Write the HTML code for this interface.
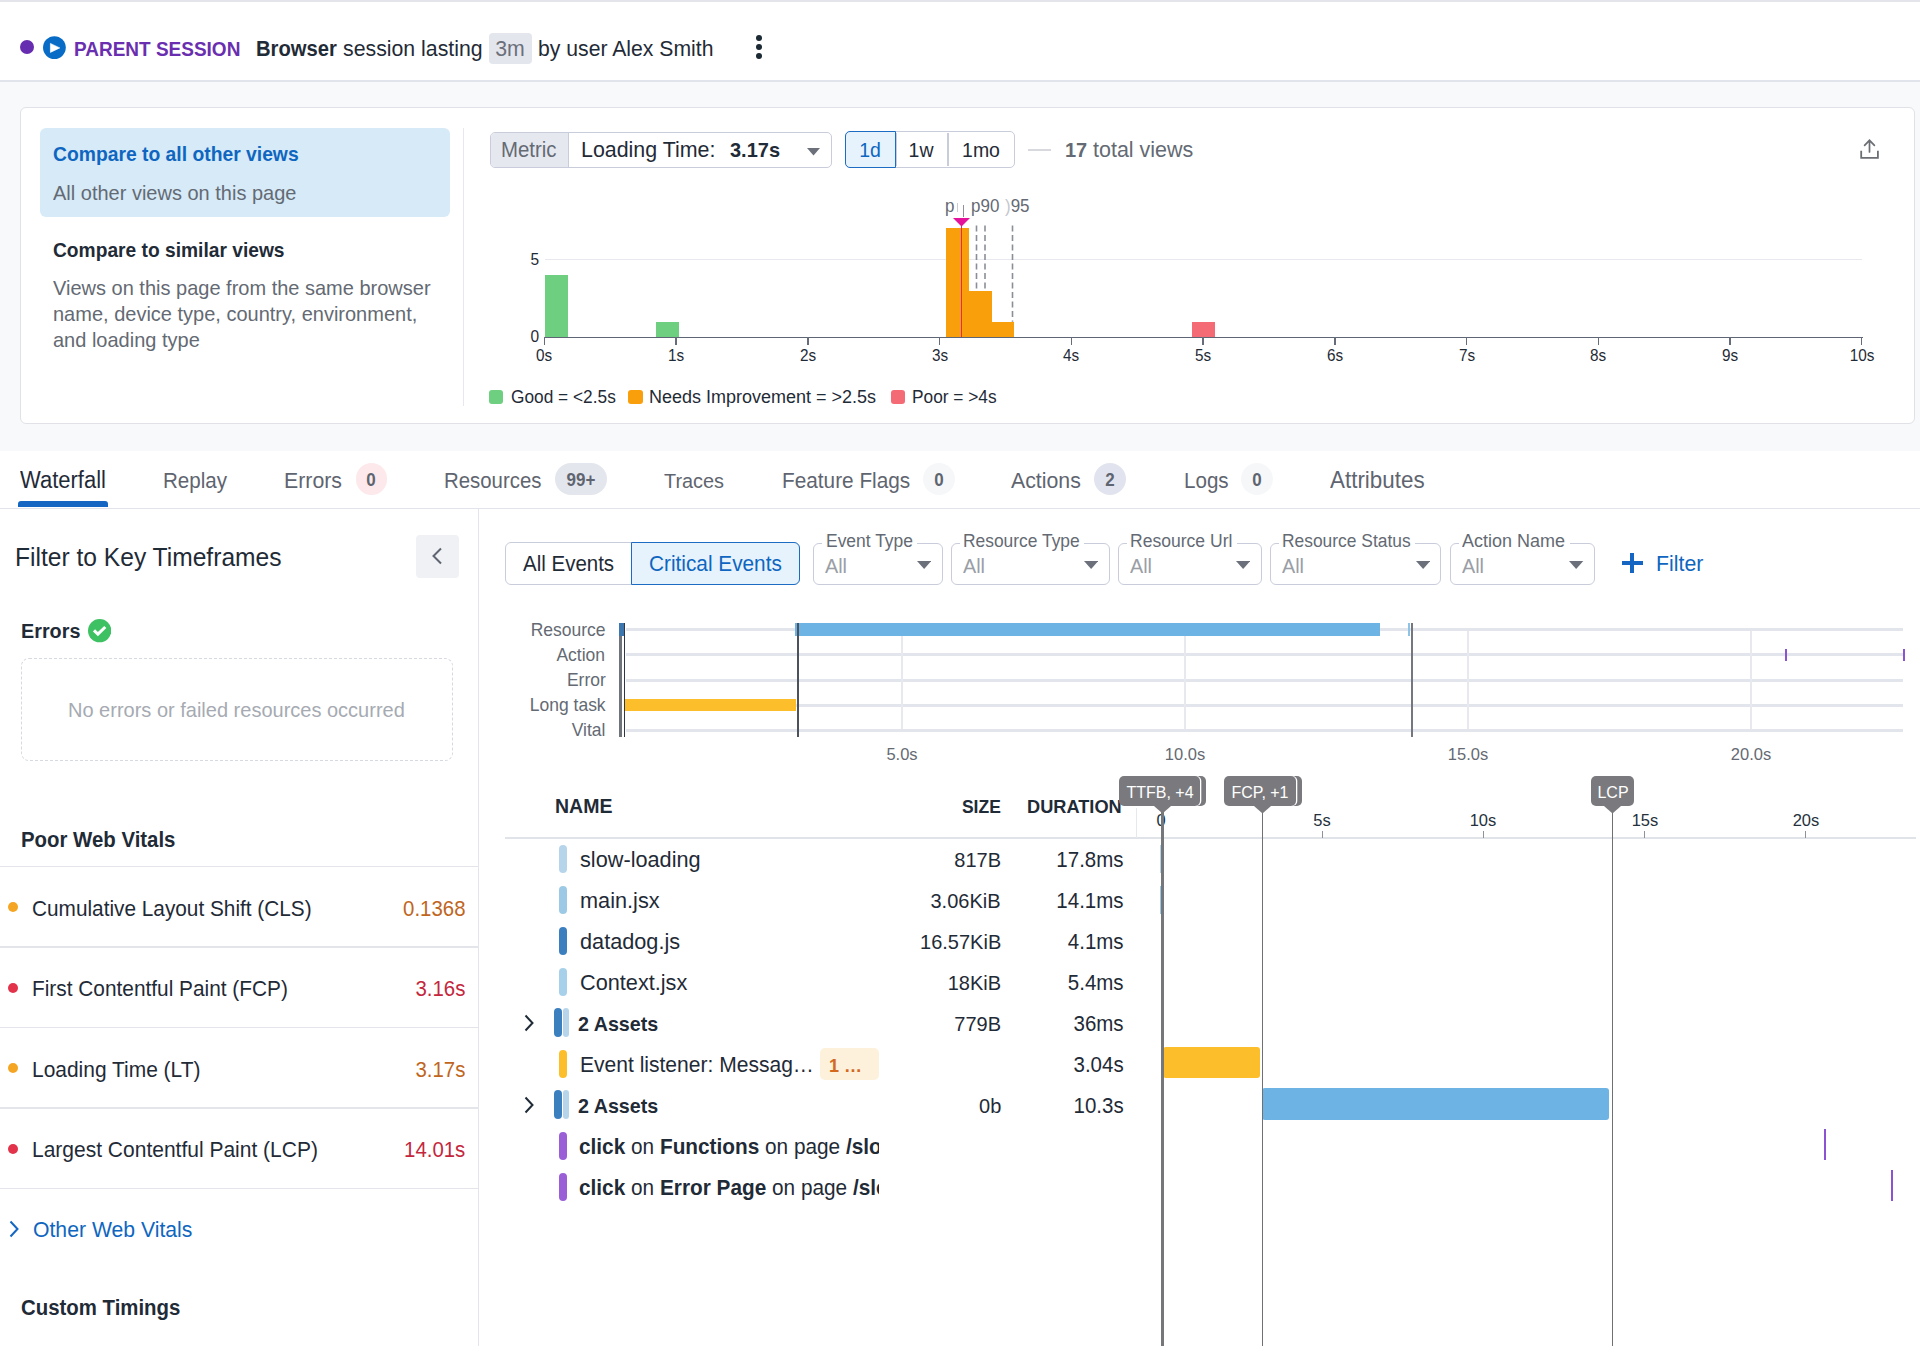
<!DOCTYPE html>
<html><head><meta charset="utf-8"><title>RUM View</title>
<style>
html,body{margin:0;padding:0;}
body{width:1920px;height:1346px;position:relative;overflow:hidden;background:#fff;font-family:"Liberation Sans",sans-serif;}
.t{position:absolute;white-space:nowrap;line-height:1;}
.r{position:absolute;}
b{font-weight:700;}
</style></head><body>
<div class="r" style="left:0.00px;top:0.00px;width:1920.00px;height:2.00px;background:#e3e5eb;"></div>
<div class="r" style="left:0.00px;top:80.00px;width:1920.00px;height:1.50px;background:#e1e4ea;"></div>
<div class="r" style="left:0.00px;top:81.50px;width:1920.00px;height:369.50px;background:#f8f9fb;"></div>
<div class="r" style="left:19.90px;top:107.10px;width:1895.30px;height:317.30px;background:#ffffff;border:1.5px solid #e0e2e7;border-radius:6px;box-sizing:border-box;"></div>
<div class="r" style="left:20.20px;top:40.10px;width:14.30px;height:14.10px;background:#672db0;border-radius:50%;"></div>
<svg class="r" style="left:43px;top:35.5px" width="23" height="23" viewBox="0 0 23 23"><circle cx="11.4" cy="11.6" r="11.4" fill="#086cc6"/><path d="M7.4 7.4 L16.8 11.9 L7.4 16.4 Z" fill="#fff" stroke="#fff" stroke-width="0.6" stroke-linejoin="round"/></svg>
<div class="t" style="left:74.20px;transform-origin:0 0;transform:scaleX(0.9524);top:40px;font-size:19.95px;color:#6a2fb0;font-weight:700;">PARENT SESSION</div>
<div class="t" style="left:255.50px;transform-origin:0 0;transform:scaleX(0.9524);top:38px;font-size:21.21px;color:#1f2b37;font-weight:700;">Browser</div>
<div class="t" style="left:342.60px;transform-origin:0 0;transform:scaleX(0.9524);top:38px;font-size:22.37px;color:#1f2b37;">session lasting</div>
<div class="r" style="left:489.00px;top:33.20px;width:42.60px;height:30.40px;background:#e4e6ee;border-radius:4px;"></div>
<div class="t" style="left:510.30px;transform:translateX(-50%) scaleX(0.9524);top:38px;font-size:22.37px;color:#6b707a;">3m</div>
<div class="t" style="left:538.00px;transform-origin:0 0;transform:scaleX(0.9524);top:38px;font-size:22.26px;color:#1f2b37;">by user Alex Smith</div>
<div class="r" style="left:756.05px;top:34.85px;width:5.90px;height:5.90px;background:#1c2a35;border-radius:50%;"></div>
<div class="r" style="left:756.05px;top:44.15px;width:5.90px;height:5.90px;background:#1c2a35;border-radius:50%;"></div>
<div class="r" style="left:756.05px;top:53.45px;width:5.90px;height:5.90px;background:#1c2a35;border-radius:50%;"></div>
<div class="r" style="left:40.00px;top:128.00px;width:410.00px;height:89.00px;background:#d6eaf8;border-radius:6px;"></div>
<div class="t" style="left:53.00px;transform-origin:0 0;transform:scaleX(0.9524);top:144px;font-size:20.27px;color:#0f66c0;font-weight:700;">Compare to all other views</div>
<div class="t" style="left:53.00px;transform-origin:0 0;transform:scaleX(0.9524);top:182px;font-size:21.0px;color:#646a73;">All other views on this page</div>
<div class="t" style="left:53.00px;transform-origin:0 0;transform:scaleX(0.9524);top:240px;font-size:20.16px;color:#1f2b37;font-weight:700;">Compare to similar views</div>
<div class="t" style="left:53.00px;transform-origin:0 0;transform:scaleX(0.9524);top:277px;font-size:21.0px;color:#646a73;">Views on this page from the same browser</div>
<div class="t" style="left:53.00px;transform-origin:0 0;transform:scaleX(0.9524);top:303px;font-size:21.0px;color:#646a73;">name, device type, country, environment,</div>
<div class="t" style="left:53.00px;transform-origin:0 0;transform:scaleX(0.9524);top:329px;font-size:21.0px;color:#646a73;">and loading type</div>
<div class="r" style="left:462.50px;top:128.00px;width:1.50px;height:278.00px;background:#e6e8ee;"></div>
<div class="r" style="left:489.50px;top:131.50px;width:342.50px;height:36.50px;background:#ffffff;border:1.5px solid #c9ccdb;border-radius:5px;box-sizing:border-box;overflow:hidden;"></div>
<div class="r" style="left:491.00px;top:133.00px;width:76.70px;height:33.50px;background:#e6e8f0;border-radius:4px 0 0 4px;"></div>
<div class="r" style="left:567.50px;top:133.00px;width:1.50px;height:33.50px;background:#c9ccdb;"></div>
<div class="t" style="left:501.00px;transform-origin:0 0;transform:scaleX(0.9524);top:140px;font-size:21.42px;color:#646a73;">Metric</div>
<div class="t" style="left:581.00px;transform-origin:0 0;transform:scaleX(0.9524);top:139px;font-size:22.47px;color:#1f2b37;">Loading Time:</div>
<div class="t" style="left:729.50px;transform-origin:0 0;transform:scaleX(0.9524);top:139px;font-size:21.0px;color:#1f2b37;font-weight:700;">3.17s</div>
<svg class="r" style="left:807px;top:148px" width="13" height="8" viewBox="0 0 13 8"><path d="M0 0 L13 0 L6.5 7.5 Z" fill="#6b707a"/></svg>
<div class="r" style="left:845.40px;top:131.30px;width:169.40px;height:36.70px;background:#ffffff;border:1.5px solid #c9ccdb;border-radius:5px;box-sizing:border-box;"></div>
<div class="r" style="left:895.00px;top:132.80px;width:1.50px;height:33.70px;background:#c9ccdb;"></div>
<div class="r" style="left:947.40px;top:132.80px;width:1.50px;height:33.70px;background:#c9ccdb;"></div>
<div class="r" style="left:845.40px;top:131.30px;width:50.50px;height:36.70px;background:#e6f3fd;border:1.7px solid #1c6cc4;border-radius:5px 0 0 5px;box-sizing:border-box;"></div>
<div class="t" style="left:870.30px;transform:translateX(-50%) scaleX(0.9524);top:140px;font-size:20.48px;color:#0f66c0;">1d</div>
<div class="t" style="left:921.20px;transform:translateX(-50%) scaleX(0.9524);top:140px;font-size:20.48px;color:#1f2b37;">1w</div>
<div class="t" style="left:980.80px;transform:translateX(-50%) scaleX(0.9524);top:140px;font-size:20.48px;color:#1f2b37;">1mo</div>
<div class="r" style="left:1028.00px;top:149.00px;width:23.40px;height:1.50px;background:#d7d9df;"></div>
<div class="t" style="left:1064.60px;transform-origin:0 0;transform:scaleX(0.9524);top:139px;font-size:21.0px;color:#646a73;font-weight:700;">17</div>
<div class="t" style="left:1093.40px;transform-origin:0 0;transform:scaleX(0.9524);top:139px;font-size:22.57px;color:#646a73;">total views</div>
<svg class="r" style="left:1850px;top:130px" width="40" height="40" viewBox="1850 130 40 40"><path d="M1861.2 150.8 V157.8 H1877.9 V150.8" fill="none" stroke="#6b6e73" stroke-width="1.8"/><path d="M1869.5 152 V140.5 M1864.6 145.4 L1869.5 140.3 L1874.4 145.4" fill="none" stroke="#6b6e73" stroke-width="1.7" stroke-linecap="round"/></svg>
<div class="r" style="left:544.70px;top:259.00px;width:1317.00px;height:1.00px;background:#e8e9ee;"></div>
<div class="r" style="left:545.00px;top:275.20px;width:22.50px;height:62.20px;background:#6fcf80;"></div>
<div class="r" style="left:656.40px;top:322.00px;width:22.80px;height:15.40px;background:#6fcf80;"></div>
<div class="r" style="left:946.40px;top:228.30px;width:22.80px;height:109.10px;background:#fa9f0c;"></div>
<div class="r" style="left:968.50px;top:290.80px;width:23.30px;height:46.60px;background:#fa9f0c;"></div>
<div class="r" style="left:991.10px;top:321.70px;width:22.90px;height:15.70px;background:#fa9f0c;"></div>
<div class="r" style="left:1192.20px;top:322.00px;width:22.60px;height:15.40px;background:#f46b76;"></div>
<svg class="r" style="left:960px;top:220px" width="60" height="120" viewBox="960 220 60 120"><line x1="976.5" y1="225.5" x2="976.5" y2="290.8" stroke="#8b8e96" stroke-width="1.6" stroke-dasharray="6 3.5"/><line x1="985" y1="225.5" x2="985" y2="290.8" stroke="#8b8e96" stroke-width="1.6" stroke-dasharray="6 3.5"/><line x1="1012.5" y1="225.5" x2="1012.5" y2="321.7" stroke="#8b8e96" stroke-width="1.6" stroke-dasharray="6 3.5"/></svg>
<div class="r" style="left:960.60px;top:222.00px;width:1.70px;height:115.40px;background:#e42a5f;"></div>
<svg class="r" style="left:953px;top:217.5px" width="17" height="9" viewBox="0 0 17 9"><path d="M0 0 L17 0 L8.5 8.5 Z" fill="#e3139b"/></svg>
<div class="t" style="left:945.30px;transform-origin:0 0;transform:scaleX(0.9524);top:198px;font-size:17.85px;color:#646a73;">p</div>
<div class="r" style="left:956.50px;top:203.00px;width:1.00px;height:9.00px;background:#c9ccd2;"></div>
<div class="r" style="left:963.00px;top:205.00px;width:1.20px;height:12.00px;background:#8e9198;"></div>
<div class="t" style="left:970.50px;transform-origin:0 0;transform:scaleX(0.9524);top:198px;font-size:17.85px;color:#646a73;">p90</div>
<div class="t" style="left:1005.00px;transform-origin:0 0;transform:scaleX(0.9524);top:198px;font-size:17.85px;color:#646a73;"><span style="color:#c5c8ce">)</span>95</div>
<div class="r" style="left:544.00px;top:336.65px;width:1318.50px;height:1.60px;background:#5e6574;"></div>
<div class="r" style="left:543.70px;top:337.40px;width:1.40px;height:7.50px;background:#666c7a;"></div>
<div class="t" style="left:544.40px;transform:translateX(-50%) scaleX(0.9524);top:347px;font-size:16.07px;color:#1f2b37;">0s</div>
<div class="r" style="left:675.44px;top:337.40px;width:1.40px;height:7.50px;background:#666c7a;"></div>
<div class="t" style="left:676.14px;transform:translateX(-50%) scaleX(0.9524);top:347px;font-size:16.07px;color:#1f2b37;">1s</div>
<div class="r" style="left:807.18px;top:337.40px;width:1.40px;height:7.50px;background:#666c7a;"></div>
<div class="t" style="left:807.88px;transform:translateX(-50%) scaleX(0.9524);top:347px;font-size:16.07px;color:#1f2b37;">2s</div>
<div class="r" style="left:938.92px;top:337.40px;width:1.40px;height:7.50px;background:#666c7a;"></div>
<div class="t" style="left:939.62px;transform:translateX(-50%) scaleX(0.9524);top:347px;font-size:16.07px;color:#1f2b37;">3s</div>
<div class="r" style="left:1070.66px;top:337.40px;width:1.40px;height:7.50px;background:#666c7a;"></div>
<div class="t" style="left:1071.36px;transform:translateX(-50%) scaleX(0.9524);top:347px;font-size:16.07px;color:#1f2b37;">4s</div>
<div class="r" style="left:1202.40px;top:337.40px;width:1.40px;height:7.50px;background:#666c7a;"></div>
<div class="t" style="left:1203.10px;transform:translateX(-50%) scaleX(0.9524);top:347px;font-size:16.07px;color:#1f2b37;">5s</div>
<div class="r" style="left:1334.14px;top:337.40px;width:1.40px;height:7.50px;background:#666c7a;"></div>
<div class="t" style="left:1334.84px;transform:translateX(-50%) scaleX(0.9524);top:347px;font-size:16.07px;color:#1f2b37;">6s</div>
<div class="r" style="left:1465.88px;top:337.40px;width:1.40px;height:7.50px;background:#666c7a;"></div>
<div class="t" style="left:1466.58px;transform:translateX(-50%) scaleX(0.9524);top:347px;font-size:16.07px;color:#1f2b37;">7s</div>
<div class="r" style="left:1597.62px;top:337.40px;width:1.40px;height:7.50px;background:#666c7a;"></div>
<div class="t" style="left:1598.32px;transform:translateX(-50%) scaleX(0.9524);top:347px;font-size:16.07px;color:#1f2b37;">8s</div>
<div class="r" style="left:1729.36px;top:337.40px;width:1.40px;height:7.50px;background:#666c7a;"></div>
<div class="t" style="left:1730.06px;transform:translateX(-50%) scaleX(0.9524);top:347px;font-size:16.07px;color:#1f2b37;">9s</div>
<div class="r" style="left:1861.10px;top:337.40px;width:1.40px;height:7.50px;background:#666c7a;"></div>
<div class="t" style="left:1861.80px;transform:translateX(-50%) scaleX(0.9524);top:347px;font-size:16.07px;color:#1f2b37;">10s</div>
<div class="t" style="right:1380.50px;transform-origin:100% 0;transform:scaleX(0.9524);top:251px;font-size:16.28px;color:#1f2b37;">5</div>
<div class="t" style="right:1380.50px;transform-origin:100% 0;transform:scaleX(0.9524);top:328px;font-size:16.28px;color:#1f2b37;">0</div>
<div class="r" style="left:489.00px;top:389.70px;width:14.30px;height:14.30px;background:#6fcf80;border-radius:3px;"></div>
<div class="r" style="left:628.30px;top:389.70px;width:14.30px;height:14.30px;background:#fa9f0c;border-radius:3px;"></div>
<div class="r" style="left:891.00px;top:389.70px;width:14.30px;height:14.30px;background:#f46b76;border-radius:3px;"></div>
<div class="t" style="left:510.80px;transform-origin:0 0;transform:scaleX(0.9524);top:388px;font-size:18.17px;color:#1f2b37;">Good = &lt;2.5s</div>
<div class="t" style="left:649.40px;transform-origin:0 0;transform:scaleX(0.9524);top:388px;font-size:18.9px;color:#1f2b37;">Needs Improvement = &gt;2.5s</div>
<div class="t" style="left:911.50px;transform-origin:0 0;transform:scaleX(0.9524);top:388px;font-size:18.17px;color:#1f2b37;">Poor = &gt;4s</div>
<div class="t" style="left:20.00px;transform-origin:0 0;transform:scaleX(0.9524);top:469px;font-size:23.1px;color:#1f2b37;">Waterfall</div>
<div class="r" style="left:18.00px;top:501.00px;width:90.00px;height:6.00px;background:#1466c2;border-radius:3px 3px 0 0;"></div>
<div class="t" style="left:163.30px;transform-origin:0 0;transform:scaleX(0.9524);top:470px;font-size:21.63px;color:#5f6570;">Replay</div>
<div class="t" style="left:284.30px;transform-origin:0 0;transform:scaleX(0.9524);top:470px;font-size:22.37px;color:#5f6570;">Errors</div>
<div class="t" style="left:444.30px;transform-origin:0 0;transform:scaleX(0.9524);top:471px;font-size:21.42px;color:#5f6570;">Resources</div>
<div class="t" style="left:664.20px;transform-origin:0 0;transform:scaleX(0.9524);top:471px;font-size:20.89px;color:#5f6570;">Traces</div>
<div class="t" style="left:781.70px;transform-origin:0 0;transform:scaleX(0.9524);top:470px;font-size:21.84px;color:#5f6570;">Feature Flags</div>
<div class="t" style="left:1010.80px;transform-origin:0 0;transform:scaleX(0.9524);top:470px;font-size:22.37px;color:#5f6570;">Actions</div>
<div class="t" style="left:1183.70px;transform-origin:0 0;transform:scaleX(0.9524);top:470px;font-size:21.63px;color:#5f6570;">Logs</div>
<div class="t" style="left:1330.40px;transform-origin:0 0;transform:scaleX(0.9524);top:469px;font-size:23.52px;color:#5f6570;">Attributes</div>
<div class="r" style="left:355.70px;top:463.30px;width:31.00px;height:31.70px;background:#fde9eb;border-radius:16px;"></div>
<div class="t" style="left:371.20px;transform:translateX(-50%) scaleX(0.9524);top:472px;font-size:17.85px;color:#5f6570;font-weight:700;">0</div>
<div class="r" style="left:555.00px;top:463.30px;width:51.70px;height:31.70px;background:#e4e6ee;border-radius:16px;"></div>
<div class="t" style="left:580.85px;transform:translateX(-50%) scaleX(0.9524);top:472px;font-size:17.85px;color:#5f6570;font-weight:700;">99+</div>
<div class="r" style="left:923.30px;top:463.30px;width:31.30px;height:31.70px;background:#f6f7f9;border-radius:16px;"></div>
<div class="t" style="left:938.95px;transform:translateX(-50%) scaleX(0.9524);top:472px;font-size:17.85px;color:#5f6570;font-weight:700;">0</div>
<div class="r" style="left:1094.00px;top:463.30px;width:31.80px;height:31.70px;background:#e1e4ee;border-radius:16px;"></div>
<div class="t" style="left:1109.90px;transform:translateX(-50%) scaleX(0.9524);top:472px;font-size:17.85px;color:#5f6570;font-weight:700;">2</div>
<div class="r" style="left:1241.00px;top:463.30px;width:32.00px;height:31.70px;background:#f6f7f9;border-radius:16px;"></div>
<div class="t" style="left:1257.00px;transform:translateX(-50%) scaleX(0.9524);top:472px;font-size:17.85px;color:#5f6570;font-weight:700;">0</div>
<div class="r" style="left:0.00px;top:507.50px;width:1920.00px;height:1.50px;background:#e1e4ea;"></div>
<div class="r" style="left:477.80px;top:509.00px;width:1.50px;height:837.00px;background:#e3e5eb;"></div>
<div class="t" style="left:14.50px;transform-origin:0 0;transform:scaleX(0.9524);top:545px;font-size:25.83px;color:#1f2b37;">Filter to Key Timeframes</div>
<div class="r" style="left:415.75px;top:534.50px;width:43.50px;height:43.50px;background:#f0f1f4;border-radius:4px;"></div>
<svg class="r" style="left:430px;top:546px" width="14" height="20" viewBox="0 0 14 20"><path d="M11 2.5 L3.5 10 L11 17.5" fill="none" stroke="#5f6570" stroke-width="2"/></svg>
<div class="t" style="left:20.50px;transform-origin:0 0;transform:scaleX(0.9524);top:621px;font-size:20.79px;color:#1f2b37;font-weight:700;">Errors</div>
<svg class="r" style="left:87.5px;top:619.3px" width="23.3" height="23.3" viewBox="0 0 24 24"><circle cx="12" cy="12" r="12" fill="#3ec163"/><path d="M6.2 11.8 L10.2 15.6 L17.8 8.2" fill="none" stroke="#fff" stroke-width="3.1" stroke-linecap="butt" stroke-linejoin="miter"/></svg>
<div class="r" style="left:20.50px;top:658.00px;width:432.50px;height:103.30px;background:none;border:1.5px dashed #d7d9e0;border-radius:8px;box-sizing:border-box;"></div>
<div class="t" style="left:68.00px;transform-origin:0 0;transform:scaleX(0.9524);top:699px;font-size:21.0px;color:#a6aab2;">No errors or failed resources occurred</div>
<div class="t" style="left:20.50px;transform-origin:0 0;transform:scaleX(0.9524);top:830px;font-size:21.42px;color:#1f2b37;font-weight:700;">Poor Web Vitals</div>
<div class="r" style="left:0.00px;top:865.75px;width:478.00px;height:1.50px;background:#e3e5eb;"></div>
<div class="r" style="left:0.00px;top:946.25px;width:478.00px;height:1.50px;background:#e3e5eb;"></div>
<div class="r" style="left:0.00px;top:1026.85px;width:478.00px;height:1.50px;background:#e3e5eb;"></div>
<div class="r" style="left:0.00px;top:1107.25px;width:478.00px;height:1.50px;background:#e3e5eb;"></div>
<div class="r" style="left:0.00px;top:1187.85px;width:478.00px;height:1.50px;background:#e3e5eb;"></div>
<div class="r" style="left:8.20px;top:902.40px;width:10.00px;height:10.00px;background:#f5a524;border-radius:50%;"></div>
<div class="t" style="left:31.80px;transform-origin:0 0;transform:scaleX(0.9524);top:898px;font-size:21.84px;color:#1f2b37;">Cumulative Layout Shift (CLS)</div>
<div class="t" style="right:1455.00px;transform-origin:100% 0;transform:scaleX(0.9524);top:899px;font-size:21.42px;color:#c0651d;">0.1368</div>
<div class="r" style="left:8.20px;top:982.80px;width:10.00px;height:10.00px;background:#e2334b;border-radius:50%;"></div>
<div class="t" style="left:31.80px;transform-origin:0 0;transform:scaleX(0.9524);top:978px;font-size:21.89px;color:#1f2b37;">First Contentful Paint (FCP)</div>
<div class="t" style="right:1455.00px;transform-origin:100% 0;transform:scaleX(0.9524);top:979px;font-size:21.42px;color:#c4273d;">3.16s</div>
<div class="r" style="left:8.20px;top:1063.20px;width:10.00px;height:10.00px;background:#f5a524;border-radius:50%;"></div>
<div class="t" style="left:31.80px;transform-origin:0 0;transform:scaleX(0.9524);top:1059px;font-size:22.0px;color:#1f2b37;">Loading Time (LT)</div>
<div class="t" style="right:1455.00px;transform-origin:100% 0;transform:scaleX(0.9524);top:1060px;font-size:21.42px;color:#c0651d;">3.17s</div>
<div class="r" style="left:8.20px;top:1143.60px;width:10.00px;height:10.00px;background:#e2334b;border-radius:50%;"></div>
<div class="t" style="left:31.80px;transform-origin:0 0;transform:scaleX(0.9524);top:1139px;font-size:22.05px;color:#1f2b37;">Largest Contentful Paint (LCP)</div>
<div class="t" style="right:1455.00px;transform-origin:100% 0;transform:scaleX(0.9524);top:1140px;font-size:21.42px;color:#c4273d;">14.01s</div>
<svg class="r" style="left:7px;top:1219px" width="14" height="20" viewBox="0 0 14 20"><path d="M3.5 2.5 L10.5 10 L3.5 17.5" fill="none" stroke="#1466c2" stroke-width="2"/></svg>
<div class="t" style="left:33.20px;transform-origin:0 0;transform:scaleX(0.9524);top:1219px;font-size:22.26px;color:#0f66c0;">Other Web Vitals</div>
<div class="t" style="left:20.60px;transform-origin:0 0;transform:scaleX(0.9524);top:1298px;font-size:21.42px;color:#1f2b37;font-weight:700;">Custom Timings</div>
<div class="r" style="left:505.40px;top:541.50px;width:294.30px;height:43.60px;background:#fff;border:1.5px solid #c9ccdb;border-radius:6px;box-sizing:border-box;"></div>
<div class="r" style="left:630.80px;top:541.50px;width:168.90px;height:43.60px;background:#e6f3fd;border:1.7px solid #1c6cc4;border-radius:0 6px 6px 0;box-sizing:border-box;"></div>
<div class="t" style="left:523.00px;transform-origin:0 0;transform:scaleX(0.9524);top:554px;font-size:21.53px;color:#1f2b37;">All Events</div>
<div class="t" style="left:648.60px;transform-origin:0 0;transform:scaleX(0.9524);top:553px;font-size:21.84px;color:#0f66c0;">Critical Events</div>
<div class="r" style="left:813.10px;top:542.50px;width:129.80px;height:42.50px;background:#fff;border:1.5px solid #c9ccdb;border-radius:6px;box-sizing:border-box;"></div>
<div class="r" style="left:822.10px;top:538.00px;width:94.98px;height:8.00px;background:#fff;"></div>
<div class="t" style="left:825.90px;transform-origin:0 0;transform:scaleX(0.9524);top:532px;font-size:18.32px;color:#646a73;">Event Type</div>
<div class="t" style="left:825.40px;transform-origin:0 0;transform:scaleX(0.9524);top:556px;font-size:20.79px;color:#9a9ea6;">All</div>
<svg class="r" style="left:917.20px;top:561px" width="14.3" height="8" viewBox="0 0 14.3 8"><path d="M0 0 L14.3 0 L7.15 8 Z" fill="#6b707a"/></svg>
<div class="r" style="left:950.50px;top:542.50px;width:159.00px;height:42.50px;background:#fff;border:1.5px solid #c9ccdb;border-radius:6px;box-sizing:border-box;"></div>
<div class="r" style="left:959.50px;top:538.00px;width:124.70px;height:8.00px;background:#fff;"></div>
<div class="t" style="left:963.30px;transform-origin:0 0;transform:scaleX(0.9524);top:532px;font-size:18.27px;color:#646a73;">Resource Type</div>
<div class="t" style="left:962.80px;transform-origin:0 0;transform:scaleX(0.9524);top:556px;font-size:20.79px;color:#9a9ea6;">All</div>
<svg class="r" style="left:1083.80px;top:561px" width="14.3" height="8" viewBox="0 0 14.3 8"><path d="M0 0 L14.3 0 L7.15 8 Z" fill="#6b707a"/></svg>
<div class="r" style="left:1117.50px;top:542.50px;width:144.25px;height:42.50px;background:#fff;border:1.5px solid #c9ccdb;border-radius:6px;box-sizing:border-box;"></div>
<div class="r" style="left:1126.50px;top:538.00px;width:110.40px;height:8.00px;background:#fff;"></div>
<div class="t" style="left:1130.30px;transform-origin:0 0;transform:scaleX(0.9524);top:532px;font-size:18.43px;color:#646a73;">Resource Url</div>
<div class="t" style="left:1129.80px;transform-origin:0 0;transform:scaleX(0.9524);top:556px;font-size:20.79px;color:#9a9ea6;">All</div>
<svg class="r" style="left:1236.05px;top:561px" width="14.3" height="8" viewBox="0 0 14.3 8"><path d="M0 0 L14.3 0 L7.15 8 Z" fill="#6b707a"/></svg>
<div class="r" style="left:1269.50px;top:542.50px;width:171.75px;height:42.50px;background:#fff;border:1.5px solid #c9ccdb;border-radius:6px;box-sizing:border-box;"></div>
<div class="r" style="left:1278.50px;top:538.00px;width:136.62px;height:8.00px;background:#fff;"></div>
<div class="t" style="left:1282.30px;transform-origin:0 0;transform:scaleX(0.9524);top:532px;font-size:18.27px;color:#646a73;">Resource Status</div>
<div class="t" style="left:1281.80px;transform-origin:0 0;transform:scaleX(0.9524);top:556px;font-size:20.79px;color:#9a9ea6;">All</div>
<svg class="r" style="left:1415.55px;top:561px" width="14.3" height="8" viewBox="0 0 14.3 8"><path d="M0 0 L14.3 0 L7.15 8 Z" fill="#6b707a"/></svg>
<div class="r" style="left:1449.50px;top:542.50px;width:145.50px;height:42.50px;background:#fff;border:1.5px solid #c9ccdb;border-radius:6px;box-sizing:border-box;"></div>
<div class="r" style="left:1458.50px;top:538.00px;width:111.04px;height:8.00px;background:#fff;"></div>
<div class="t" style="left:1462.30px;transform-origin:0 0;transform:scaleX(0.9524);top:532px;font-size:18.9px;color:#646a73;">Action Name</div>
<div class="t" style="left:1461.80px;transform-origin:0 0;transform:scaleX(0.9524);top:556px;font-size:20.79px;color:#9a9ea6;">All</div>
<svg class="r" style="left:1569.30px;top:561px" width="14.3" height="8" viewBox="0 0 14.3 8"><path d="M0 0 L14.3 0 L7.15 8 Z" fill="#6b707a"/></svg>
<div class="r" style="left:1621.75px;top:561.30px;width:20.75px;height:4.00px;background:#1466c2;"></div>
<div class="r" style="left:1630.10px;top:553.25px;width:4.00px;height:20.00px;background:#1466c2;"></div>
<div class="t" style="left:1655.75px;transform-origin:0 0;transform:scaleX(0.9524);top:553px;font-size:22.37px;color:#0f66c0;">Filter</div>
<div class="t" style="right:1314.50px;transform-origin:100% 0;transform:scaleX(0.9524);top:621px;font-size:18.38px;color:#646a73;">Resource</div>
<div class="t" style="right:1314.50px;transform-origin:100% 0;transform:scaleX(0.9524);top:646px;font-size:18.38px;color:#646a73;">Action</div>
<div class="t" style="right:1314.50px;transform-origin:100% 0;transform:scaleX(0.9524);top:671px;font-size:18.38px;color:#646a73;">Error</div>
<div class="t" style="right:1314.50px;transform-origin:100% 0;transform:scaleX(0.9524);top:696px;font-size:18.38px;color:#646a73;">Long task</div>
<div class="t" style="right:1314.50px;transform-origin:100% 0;transform:scaleX(0.9524);top:721px;font-size:18.38px;color:#646a73;">Vital</div>
<div class="r" style="left:625.80px;top:628.20px;width:1277.20px;height:3.00px;background:#e3e5ec;"></div>
<div class="r" style="left:625.80px;top:653.35px;width:1277.20px;height:3.00px;background:#e3e5ec;"></div>
<div class="r" style="left:625.80px;top:678.50px;width:1277.20px;height:3.00px;background:#e3e5ec;"></div>
<div class="r" style="left:625.80px;top:703.65px;width:1277.20px;height:3.00px;background:#e3e5ec;"></div>
<div class="r" style="left:625.80px;top:728.80px;width:1277.20px;height:3.00px;background:#e3e5ec;"></div>
<div class="r" style="left:901.05px;top:631.00px;width:1.50px;height:98.00px;background:#e8e9ee;"></div>
<div class="r" style="left:1184.25px;top:631.00px;width:1.50px;height:98.00px;background:#e8e9ee;"></div>
<div class="r" style="left:1467.25px;top:631.00px;width:1.50px;height:98.00px;background:#e8e9ee;"></div>
<div class="r" style="left:1750.45px;top:631.00px;width:1.50px;height:98.00px;background:#e8e9ee;"></div>
<div class="r" style="left:618.80px;top:623.30px;width:3.40px;height:113.40px;background:#6e737c;"></div>
<div class="r" style="left:618.80px;top:623.30px;width:6.00px;height:12.70px;background:#3d77b0;"></div>
<div class="r" style="left:623.50px;top:623.30px;width:1.60px;height:113.40px;background:#2d3748;"></div>
<div class="r" style="left:625.00px;top:699.20px;width:170.80px;height:12.10px;background:#fcbf2b;"></div>
<div class="r" style="left:795.30px;top:623.30px;width:584.70px;height:12.70px;background:#6db3e4;"></div>
<div class="r" style="left:796.90px;top:623.20px;width:1.80px;height:113.80px;background:#4b525b;"></div>
<div class="r" style="left:1408.00px;top:623.30px;width:1.50px;height:12.70px;background:#8fc3e6;"></div>
<div class="r" style="left:1411.00px;top:623.20px;width:1.80px;height:113.80px;background:#74777e;"></div>
<div class="r" style="left:1784.70px;top:648.70px;width:2.00px;height:12.00px;background:#8b52d1;"></div>
<div class="r" style="left:1902.80px;top:648.70px;width:2.00px;height:12.00px;background:#8b52d1;"></div>
<div class="t" style="left:901.80px;transform:translateX(-50%) scaleX(0.9524);top:746px;font-size:17.32px;color:#646a73;">5.0s</div>
<div class="t" style="left:1185.00px;transform:translateX(-50%) scaleX(0.9524);top:746px;font-size:17.32px;color:#646a73;">10.0s</div>
<div class="t" style="left:1468.00px;transform:translateX(-50%) scaleX(0.9524);top:746px;font-size:17.32px;color:#646a73;">15.0s</div>
<div class="t" style="left:1751.20px;transform:translateX(-50%) scaleX(0.9524);top:746px;font-size:17.32px;color:#646a73;">20.0s</div>
<div class="t" style="left:555.00px;transform-origin:0 0;transform:scaleX(0.9524);top:796px;font-size:20.48px;color:#1f2b37;font-weight:700;">NAME</div>
<div class="t" style="right:919.00px;transform-origin:100% 0;transform:scaleX(0.9524);top:798px;font-size:18.38px;color:#1f2b37;font-weight:700;">SIZE</div>
<div class="t" style="left:1026.80px;transform-origin:0 0;transform:scaleX(0.9524);top:797px;font-size:19.11px;color:#1f2b37;font-weight:700;">DURATION</div>
<div class="r" style="left:505.00px;top:837.40px;width:1411.00px;height:1.30px;background:#e0e3e8;"></div>
<div class="r" style="left:1135.70px;top:808.00px;width:1.50px;height:30.00px;background:#e6e8ee;"></div>
<div class="t" style="left:1161.10px;transform:translateX(-50%) scaleX(0.9524);top:812px;font-size:17.32px;color:#25313c;">0</div>
<div class="r" style="left:1160.50px;top:831.30px;width:1.20px;height:6.50px;background:#8e9198;"></div>
<div class="t" style="left:1322.25px;transform:translateX(-50%) scaleX(0.9524);top:812px;font-size:17.32px;color:#25313c;">5s</div>
<div class="r" style="left:1321.65px;top:831.30px;width:1.20px;height:6.50px;background:#8e9198;"></div>
<div class="t" style="left:1483.20px;transform:translateX(-50%) scaleX(0.9524);top:812px;font-size:17.32px;color:#25313c;">10s</div>
<div class="r" style="left:1482.60px;top:831.30px;width:1.20px;height:6.50px;background:#8e9198;"></div>
<div class="t" style="left:1644.60px;transform:translateX(-50%) scaleX(0.9524);top:812px;font-size:17.32px;color:#25313c;">15s</div>
<div class="r" style="left:1644.00px;top:831.30px;width:1.20px;height:6.50px;background:#8e9198;"></div>
<div class="t" style="left:1805.70px;transform:translateX(-50%) scaleX(0.9524);top:812px;font-size:17.32px;color:#25313c;">20s</div>
<div class="r" style="left:1805.10px;top:831.30px;width:1.20px;height:6.50px;background:#8e9198;"></div>
<div class="r" style="left:559.00px;top:844.80px;width:7.70px;height:28.00px;background:#b7d5ea;border-radius:4px;"></div>
<div class="t" style="left:579.50px;transform-origin:0 0;transform:scaleX(0.9524);top:848px;font-size:22.79px;color:#1f2b37;">slow-loading</div>
<div class="t" style="right:919.00px;transform-origin:100% 0;transform:scaleX(0.9524);top:849px;font-size:21.0px;color:#1f2b37;">817B</div>
<div class="t" style="right:796.00px;transform-origin:100% 0;transform:scaleX(0.9524);top:850px;font-size:21.53px;color:#1f2b37;">17.8ms</div>
<div class="r" style="left:559.00px;top:885.80px;width:7.70px;height:28.00px;background:#9ccae6;border-radius:4px;"></div>
<div class="t" style="left:579.50px;transform-origin:0 0;transform:scaleX(0.9524);top:889px;font-size:22.79px;color:#1f2b37;">main.jsx</div>
<div class="t" style="right:919.00px;transform-origin:100% 0;transform:scaleX(0.9524);top:890px;font-size:21.0px;color:#1f2b37;">3.06KiB</div>
<div class="t" style="right:796.00px;transform-origin:100% 0;transform:scaleX(0.9524);top:891px;font-size:21.53px;color:#1f2b37;">14.1ms</div>
<div class="r" style="left:559.00px;top:926.80px;width:7.70px;height:28.00px;background:#3b7fbf;border-radius:4px;"></div>
<div class="t" style="left:579.50px;transform-origin:0 0;transform:scaleX(0.9524);top:930px;font-size:22.79px;color:#1f2b37;">datadog.js</div>
<div class="t" style="right:919.00px;transform-origin:100% 0;transform:scaleX(0.9524);top:931px;font-size:21.0px;color:#1f2b37;">16.57KiB</div>
<div class="t" style="right:796.00px;transform-origin:100% 0;transform:scaleX(0.9524);top:932px;font-size:21.53px;color:#1f2b37;">4.1ms</div>
<div class="r" style="left:559.00px;top:967.80px;width:7.70px;height:28.00px;background:#a7d0ea;border-radius:4px;"></div>
<div class="t" style="left:579.50px;transform-origin:0 0;transform:scaleX(0.9524);top:971px;font-size:22.79px;color:#1f2b37;">Context.jsx</div>
<div class="t" style="right:919.00px;transform-origin:100% 0;transform:scaleX(0.9524);top:972px;font-size:21.0px;color:#1f2b37;">18KiB</div>
<div class="t" style="right:796.00px;transform-origin:100% 0;transform:scaleX(0.9524);top:973px;font-size:21.53px;color:#1f2b37;">5.4ms</div>
<div class="r" style="left:554.20px;top:1007.60px;width:7.50px;height:29.50px;background:#3b7fbf;border-radius:4px;"></div>
<div class="r" style="left:563.20px;top:1007.60px;width:5.70px;height:29.50px;background:#b7d5ea;border-radius:3px;"></div>
<svg class="r" style="left:522px;top:1014.20px" width="14" height="18" viewBox="0 0 14 18"><path d="M3.5 1.5 L10.5 9 L3.5 16.5" fill="none" stroke="#1f2b37" stroke-width="2"/></svg>
<div class="t" style="left:577.50px;transform-origin:0 0;transform:scaleX(0.9524);top:1014px;font-size:20.68px;color:#1f2b37;font-weight:700;">2 Assets</div>
<div class="t" style="right:919.00px;transform-origin:100% 0;transform:scaleX(0.9524);top:1013px;font-size:21.0px;color:#1f2b37;">779B</div>
<div class="t" style="right:796.00px;transform-origin:100% 0;transform:scaleX(0.9524);top:1014px;font-size:21.53px;color:#1f2b37;">36ms</div>
<div class="r" style="left:559.00px;top:1049.80px;width:7.70px;height:28.00px;background:#fcbf2b;border-radius:4px;"></div>
<div class="t" style="left:579.50px;transform-origin:0 0;transform:scaleX(0.9524);top:1054px;font-size:22.1px;color:#1f2b37;">Event listener: Messag…</div>
<div class="t" style="right:796.00px;transform-origin:100% 0;transform:scaleX(0.9524);top:1055px;font-size:21.53px;color:#1f2b37;">3.04s</div>
<div class="r" style="left:554.20px;top:1089.60px;width:7.50px;height:29.50px;background:#3b7fbf;border-radius:4px;"></div>
<div class="r" style="left:563.20px;top:1089.60px;width:5.70px;height:29.50px;background:#b7d5ea;border-radius:3px;"></div>
<svg class="r" style="left:522px;top:1096.20px" width="14" height="18" viewBox="0 0 14 18"><path d="M3.5 1.5 L10.5 9 L3.5 16.5" fill="none" stroke="#1f2b37" stroke-width="2"/></svg>
<div class="t" style="left:577.50px;transform-origin:0 0;transform:scaleX(0.9524);top:1096px;font-size:20.68px;color:#1f2b37;font-weight:700;">2 Assets</div>
<div class="t" style="right:919.00px;transform-origin:100% 0;transform:scaleX(0.9524);top:1095px;font-size:21.0px;color:#1f2b37;">0b</div>
<div class="t" style="right:796.00px;transform-origin:100% 0;transform:scaleX(0.9524);top:1096px;font-size:21.53px;color:#1f2b37;">10.3s</div>
<div class="r" style="left:559.00px;top:1131.80px;width:7.70px;height:28.00px;background:#9a5fd6;border-radius:4px;"></div>
<div class="r" style="left:579.4px;top:1129.70px;width:299.6px;height:34px;overflow:hidden;">
<div class="t" style="left:0.00px;transform-origin:0 0;transform:scaleX(0.9524);top:6px;font-size:21.84px;color:#1f2b37;font-weight:400;"><b>click</b> on <b>Functions</b> on page <b>/slow-loading</b></div>
</div>
<div class="r" style="left:559.00px;top:1172.80px;width:7.70px;height:28.00px;background:#9a5fd6;border-radius:4px;"></div>
<div class="r" style="left:579.4px;top:1170.70px;width:299.6px;height:34px;overflow:hidden;">
<div class="t" style="left:0.00px;transform-origin:0 0;transform:scaleX(0.9524);top:6px;font-size:21.84px;color:#1f2b37;font-weight:400;"><b>click</b> on <b>Error Page</b> on page <b>/slow-loading</b></div>
</div>
<div class="r" style="left:820.00px;top:1048.00px;width:58.60px;height:32.00px;background:#fdf1dc;border-radius:5px;"></div>
<div class="t" style="left:828.70px;transform-origin:0 0;transform:scaleX(0.9524);top:1057px;font-size:18.9px;color:#d2691e;font-weight:700;">1 …</div>
<div class="r" style="left:1160.00px;top:845.00px;width:2.00px;height:28.00px;background:#b7d5ea;"></div>
<div class="r" style="left:1160.00px;top:886.00px;width:2.00px;height:28.00px;background:#9ccae6;"></div>
<div class="r" style="left:1163.20px;top:1047.00px;width:97.00px;height:31.20px;background:#fcbf2b;border-radius:3px;"></div>
<div class="r" style="left:1261.50px;top:1088.40px;width:347.70px;height:31.20px;background:#6db3e4;border-radius:3px;"></div>
<div class="r" style="left:1824.00px;top:1129.00px;width:2.00px;height:31.20px;background:#8b52d1;"></div>
<div class="r" style="left:1891.40px;top:1170.00px;width:2.00px;height:31.20px;background:#8b52d1;"></div>
<div class="r" style="left:1161.00px;top:808.00px;width:3.00px;height:538.00px;background:#76777b;"></div>
<div class="r" style="left:1261.70px;top:808.00px;width:1.60px;height:538.00px;background:#6f7074;"></div>
<div class="r" style="left:1611.80px;top:808.00px;width:1.60px;height:538.00px;background:#6f7074;"></div>
<div class="r" style="left:1190.00px;top:776.25px;width:16.00px;height:29.75px;background:#7a7a7e;border-radius:5px;"></div>
<div class="r" style="left:1119.40px;top:776.25px;width:80.60px;height:29.75px;background:#7a7a7e;border-radius:5px;box-shadow:1.3px 0 0 0 #ffffff;"></div>
<svg class="r" style="left:1154.00px;top:805.5px" width="17" height="8" viewBox="0 0 17 8"><path d="M0 0 L17 0 L8.5 7.5 Z" fill="#7a7a7e"/></svg>
<div class="t" style="left:1159.70px;transform:translateX(-50%) scaleX(0.9524);top:785px;font-size:16.8px;color:#ffffff;">TTFB, +4</div>
<div class="r" style="left:1285.60px;top:776.25px;width:16.30px;height:29.75px;background:#7a7a7e;border-radius:5px;"></div>
<div class="r" style="left:1224.00px;top:776.25px;width:71.60px;height:29.75px;background:#7a7a7e;border-radius:5px;box-shadow:1.3px 0 0 0 #ffffff;"></div>
<svg class="r" style="left:1254.00px;top:805.5px" width="17" height="8" viewBox="0 0 17 8"><path d="M0 0 L17 0 L8.5 7.5 Z" fill="#7a7a7e"/></svg>
<div class="t" style="left:1259.80px;transform:translateX(-50%) scaleX(0.9524);top:785px;font-size:16.8px;color:#ffffff;">FCP, +1</div>
<div class="r" style="left:1591.20px;top:776.25px;width:42.80px;height:29.75px;background:#7a7a7e;border-radius:5px;"></div>
<svg class="r" style="left:1604.10px;top:805.5px" width="17" height="8" viewBox="0 0 17 8"><path d="M0 0 L17 0 L8.5 7.5 Z" fill="#7a7a7e"/></svg>
<div class="t" style="left:1612.60px;transform:translateX(-50%) scaleX(0.9524);top:785px;font-size:16.8px;color:#ffffff;">LCP</div>
</body></html>
